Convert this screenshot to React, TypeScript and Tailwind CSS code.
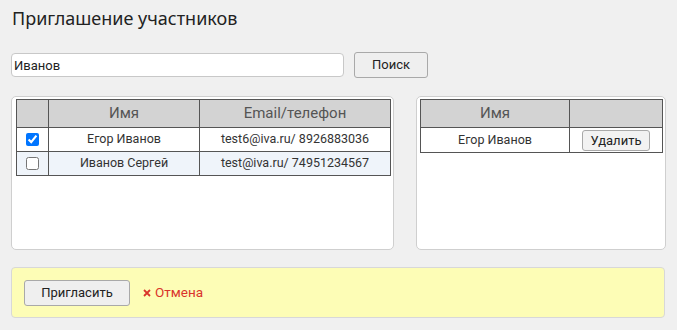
import React, { useState } from 'react';

type Person = { id: number; name: string; contact: string };

const found: Person[] = [
  { id: 1, name: 'Егор Иванов', contact: 'test6@iva.ru/ 8926883036' },
  { id: 2, name: 'Иванов Сергей', contact: 'test@iva.ru/ 74951234567' },
];

const titleFont = { fontFamily: '"Noto Sans", "Open Sans", Arial, sans-serif' };
const font = { fontFamily: 'Roboto, "Noto Sans", Arial, sans-serif' };

export default function App() {
  const [query, setQuery] = useState('Иванов');
  const [selected, setSelected] = useState<number[]>([1]);

  const toggle = (id: number) =>
    setSelected((s) => (s.includes(id) ? s.filter((x) => x !== id) : [...s, id]));

  const invited = found.filter((p) => selected.includes(p.id));

  return (
    <div className="w-[677px] h-[330px] bg-[#f0f0f0] px-[11px] pt-[6px] text-[#333]" style={font}>
      <h1 className="text-[18px] leading-[24px] text-[#222] pl-[1px]" style={titleFont}>
        Приглашение участников
      </h1>

      <div className="flex items-center gap-[10px] mt-[22px]">
        <input
          value={query}
          onChange={(e) => setQuery(e.target.value)}
          className="w-[333px] h-[24px] bg-white border border-[#c8c8c8] rounded-[4px] px-[2px] text-[13px] text-[#222] outline-none"
          style={font}
        />
        <button className="w-[74px] h-[26px] bg-[#efefef] border border-[#a9a9a9] rounded-[3px] text-[13px] text-[#222]">
          Поиск
        </button>
      </div>

      <div className="flex gap-[22px] mt-[18px]">
        <div className="w-[383px] h-[154px] bg-white border border-[#cfcfcf] rounded-[5px] pt-[2px] px-[4px]">
          <table className="w-[374px] border-collapse text-[12.5px] table-fixed">
            <colgroup>
              <col className="w-[32px]" />
              <col className="w-[151px]" />
              <col className="w-[191px]" />
            </colgroup>
            <thead>
              <tr className="h-[28px] bg-[#d3d3d3] text-[#555] text-[15px]">
                <th className="border border-[#555] font-normal"></th>
                <th className="border border-[#555] font-normal">Имя</th>
                <th className="border border-[#555] font-normal">Email/телефон</th>
              </tr>
            </thead>
            <tbody>
              {found.map((p, i) => (
                <tr key={p.id} className={`h-[24px] ${i % 2 === 1 ? 'bg-[#eff4fa]' : 'bg-white'}`}>
                  <td className="border border-[#555] text-center leading-none">
                    <input
                      type="checkbox"
                      checked={selected.includes(p.id)}
                      onChange={() => toggle(p.id)}
                      className="w-[13px] h-[13px] align-middle"
                    />
                  </td>
                  <td className="border border-[#555] text-center">{p.name}</td>
                  <td className="border border-[#555] text-center">{p.contact}</td>
                </tr>
              ))}
            </tbody>
          </table>
        </div>

        <div className="w-[250px] h-[154px] bg-white border border-[#cfcfcf] rounded-[5px] pt-[2px] px-[3px]">
          <table className="w-[242px] border-collapse text-[12.5px] table-fixed">
            <colgroup>
              <col className="w-[149px]" />
              <col className="w-[93px]" />
            </colgroup>
            <thead>
              <tr className="h-[28px] bg-[#d3d3d3] text-[#555] text-[15px]">
                <th className="border border-[#555] font-normal">Имя</th>
                <th className="border border-[#555] font-normal"></th>
              </tr>
            </thead>
            <tbody>
              {invited.map((p) => (
                <tr key={p.id} className="h-[25px]">
                  <td className="border border-[#555] text-center">{p.name}</td>
                  <td className="border border-[#555] text-center">
                    <button
                      onClick={() => toggle(p.id)}
                      className="h-[21px] px-[8px] bg-[#f2f2f2] border border-[#a9a9a9] rounded-[3px] text-[13px] text-[#222] leading-none align-middle"
                    >
                      Удалить
                    </button>
                  </td>
                </tr>
              ))}
            </tbody>
          </table>
        </div>
      </div>

      <div className="w-[654px] h-[51px] mt-[17px] bg-[#fdfdb6] border border-[#d8d8d8] rounded-[4px] flex items-center px-[12px] gap-[13px]">
        <button className="w-[106px] h-[26px] bg-[#efefef] border border-[#a9a9a9] rounded-[3px] text-[13px] text-[#222]">
          Пригласить
        </button>
        <button className="flex items-center gap-[4px] text-[13.5px] text-[#d9342b]">
          <svg width="8" height="8" viewBox="0 0 8 8" className="mt-[1px]">
            <path d="M1 1L7 7M7 1L1 7" stroke="#d9342b" strokeWidth="1.8" />
          </svg>
          Отмена
        </button>
      </div>
    </div>
  );
}
